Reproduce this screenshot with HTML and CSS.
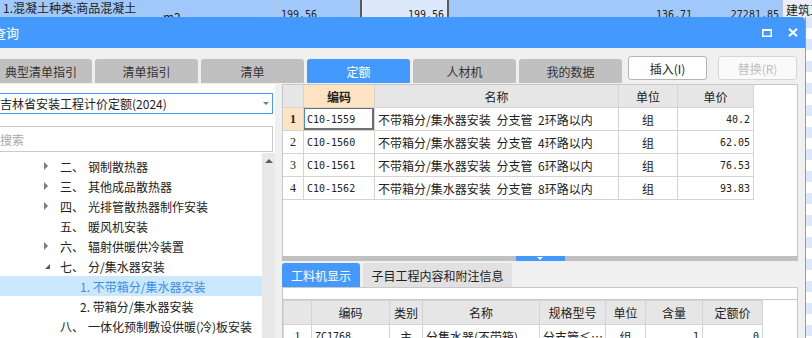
FILE: index.html
```html
<!DOCTYPE html>
<html>
<head>
<meta charset="utf-8">
<title>查询</title>
<link rel="stylesheet" href="styles.css">
</head>
<body>
<div class="sheet">
  <div class="sc sc-desc">1.混凝土种类:商品混凝土<br>2.混凝土强度等级:C30</div>
  <div class="sc sc-unit">m2</div>
  <div class="sc sc-a"></div>
  <div class="sc sc-qty mono">199.56</div>
  <div class="sc sc-cur mono">199.56</div>
  <div class="sc sc-b"></div>
  <div class="sc sc-c"></div>
  <div class="sc sc-price mono">136.71</div>
  <div class="sc sc-sum mono">27281.85</div>
  <div class="sc sc-last">建筑工程</div>
</div>

<div class="desk">
  <div class="dialog">
    <div class="titlebar">
      <span class="title">查询</span>
      <svg class="tb-max" width="10" height="8" viewBox="0 0 10 8"><rect x="0.75" y="1" width="8.5" height="6.25" fill="none" stroke="#fff" stroke-width="1.5"/><rect x="0" y="0" width="10" height="2" fill="#fff"/></svg>
      <svg class="tb-close" width="10" height="9" viewBox="0 0 10 9"><path d="M1 0.8 L9 8.2 M9 0.8 L1 8.2" stroke="#fff" stroke-width="2" fill="none"/></svg>
    </div>
    <div class="dlg-body">
      <div class="toolbar">
        <div class="tabs">
          <div class="tab">典型清单指引</div>
          <div class="tab">清单指引</div>
          <div class="tab">清单</div>
          <div class="tab on">定额</div>
          <div class="tab">人材机</div>
          <div class="tab">我的数据</div>
        </div>
        <button class="btn">插入(I)</button>
        <button class="btn btn-off">替换(R)</button>
      </div>

      <div class="main">
        <div class="left">
          <div class="combo"><span>吉林省安装工程计价定额(2024)</span><i class="caret"></i></div>
          <div class="search">搜索</div>
          <div class="tree">
            <ul class="nodes">
              <li class="node"><i class="tw closed"></i><span class="num">二、</span>钢制散热器</li>
              <li class="node"><i class="tw closed"></i><span class="num">三、</span>其他成品散热器</li>
              <li class="node"><i class="tw closed"></i><span class="num">四、</span>光排管散热器制作安装</li>
              <li class="node"><i class="tw"></i><span class="num">五、</span>暖风机安装</li>
              <li class="node"><i class="tw closed"></i><span class="num">六、</span>辐射供暖供冷装置</li>
              <li class="node"><i class="tw open"></i><span class="num">七、</span>分/集水器安装</li>
              <li class="node child sel">1. 不带箱分/集水器安装</li>
              <li class="node child">2. 带箱分/集水器安装</li>
              <li class="node"><i class="tw"></i><span class="num">八、</span>一体化预制敷设供暖(冷)板安装</li>
            </ul>
            <div class="vscroll"><i class="up"></i></div>
          </div>
        </div>

        <div class="right">
          <div class="upper">
            <table class="grid quota">
              <colgroup><col class="w21"><col class="w71"><col class="w244"><col class="w59"><col class="w76"></colgroup>
              <tr>
                <th></th><th class="sort">编码</th><th>名称</th><th>单位</th><th>单价</th>
              </tr>
              <tr>
                <td class="rn cur">1</td><td class="mono sel">C10-1559</td><td class="name">不带箱分/集水器安装 分支管 2环路以内</td><td class="c">组</td><td class="r mono">40.2</td>
              </tr>
              <tr>
                <td class="rn">2</td><td class="mono">C10-1560</td><td class="name">不带箱分/集水器安装 分支管 4环路以内</td><td class="c">组</td><td class="r mono">62.05</td>
              </tr>
              <tr>
                <td class="rn">3</td><td class="mono">C10-1561</td><td class="name">不带箱分/集水器安装 分支管 6环路以内</td><td class="c">组</td><td class="r mono">76.53</td>
              </tr>
              <tr>
                <td class="rn">4</td><td class="mono">C10-1562</td><td class="name">不带箱分/集水器安装 分支管 8环路以内</td><td class="c">组</td><td class="r mono">93.83</td>
              </tr>
            </table>
          </div>
          <div class="splitter"><span class="grip"></span></div>
          <div class="subtabs">
            <div class="stab on">工料机显示</div>
            <div class="stab">子目工程内容和附注信息</div>
          </div>
          <div class="lower">
            <div class="inner">
              <table class="grid res">
                <colgroup><col class="w28"><col class="w78"><col class="w33"><col class="w117"><col class="w66"><col class="w40"><col class="w57"><col class="w60"></colgroup>
                <tr class="hd">
                  <th></th><th>编码</th><th>类别</th><th>名称</th><th>规格型号</th><th>单位</th><th>含量</th><th>定额价</th>
                </tr>
                <tr>
                  <td class="rn">1</td><td class="mono">ZC1768</td><td class="c">主</td><td>分集水器(不带箱)</td><td>分支管≤…</td><td class="c">组</td><td class="r mono">1</td><td class="r mono">0</td>
                </tr>
              </table>
            </div>
          </div>
        </div>
      </div>
    </div>
  </div>
  <div class="desk-edge"></div>
</div>
</body>
</html>
```

FILE: styles.css
```css
body {
  margin: 0;
  width: 812px;
  height: 338px;
  overflow: hidden;
  background: #fff;
  color: #222;
  font-family: "Noto Sans CJK SC", "Noto Sans", sans-serif;
  font-size: 12px;
}

.mono {
  font-family: "DejaVu Sans Mono", "Liberation Mono", monospace;
  font-size: 10px;
}

/* spreadsheet row behind the dialog */
.sheet {
  display: flex;
  height: 17px;
  overflow: hidden;
  background: #a0c8fa;
}
.sc {
  flex: none;
  box-sizing: border-box;
  height: 17px;
  border-right: 1px solid #b8c4d4;
  white-space: nowrap;
  overflow: hidden;
}
.sc-desc {
  width: 160px;
  padding-left: 3px;
  line-height: 15px;
}
.sc-unit {
  width: 46px;
  padding: 8px 0 0 3px;
}
.sc-a { width: 71px; }
.sc-qty {
  width: 85px;
  padding: 9px 0 0 4px;
  border-right: 2px solid #5a5a5a;
}
.sc-cur {
  width: 87px;
  padding: 9px 3px 0 0;
  text-align: right;
  background: #dde9fb;
  border-right: 2px solid #5a5a5a;
}
.sc-b { width: 81px; }
.sc-c { width: 82px; }
.sc-price {
  width: 86px;
  padding: 9px 5px 0 0;
  text-align: right;
}
.sc-sum {
  width: 85px;
  padding: 9px 3px 0 0;
  text-align: right;
}
.sc-last {
  flex: 1;
  padding: 1px 0 0 3px;
  background: #e9eef8;
  border-right: none;
}

/* dialog */
.desk {
  display: flex;
  height: 321px;
}
.dialog {
  flex: none;
  width: 815px;
  margin-left: -10px;
  display: flex;
  flex-direction: column;
  background: #f0f0f0;
}
.desk-edge {
  flex: 1;
  border-left: 1px solid #9a9a9a;
  background: repeating-linear-gradient(to bottom, #dce8fb 0 11px, #fff 11px 22px);
}

.titlebar {
  height: 31px;
  flex: none;
  display: flex;
  align-items: center;
  padding: 0 7px 0 3px;
  background: #4499ff;
  color: #fff;
  font-size: 13px;
  border-radius: 0 4px 0 0;
}
.title {
  flex: 1;
}
.tb-close {
  margin-left: 16px;
}

.dlg-body {
  flex: 1;
  display: flex;
  flex-direction: column;
  min-height: 0;
}

.toolbar {
  height: 36px;
  flex: none;
  display: flex;
  align-items: flex-start;
}
.tabs {
  display: flex;
  gap: 3px;
  margin-top: 11px;
}
.tab {
  width: 103px;
  height: 24px;
  display: flex;
  align-items: center;
  justify-content: center;
  background: #c0c0c0;
  color: #333;
  border-radius: 3px 3px 0 0;
}
.tab:first-child {
  width: 102px;
}
.tab.on {
  background: #4499ff;
  color: #fff;
}
.btn {
  margin: 8px 0 0 6px;
  width: 79px;
  height: 24px;
  padding: 0;
  background: #fff;
  border: 1px solid #b4b4b4;
  border-radius: 3px;
  color: #222;
  font: inherit;
}
.btn + .btn {
  margin-left: 11px;
}
.btn-off {
  color: #bdbdbd;
  border-color: #d6d6d6;
  background: #fafafa;
}

.main {
  flex: 1;
  display: flex;
  gap: 7px;
  min-height: 0;
}

/* left: quota library tree */
.left {
  width: 285px;
  flex: none;
  display: flex;
  flex-direction: column;
  background: #fff;
}
.combo {
  box-sizing: border-box;
  margin: 9px 0 0 6px;
  width: 277px;
  height: 21px;
  flex: none;
  display: flex;
  align-items: center;
  padding-left: 3px;
  border: 1px solid #4499ff;
}
.caret {
  margin: 0 3px 0 auto;
  border-top: 3px solid #7a7a7a;
  border-left: 3px solid transparent;
  border-right: 3px solid transparent;
}
.search {
  box-sizing: border-box;
  margin: 12px 0 0 6px;
  width: 277px;
  height: 26px;
  flex: none;
  display: flex;
  align-items: center;
  padding-left: 3px;
  border: 1px solid #c9c9c9;
  color: #a8a8a8;
}
.tree {
  flex: 1;
  display: flex;
  min-height: 0;
  overflow: hidden;
}
.nodes {
  flex: 1;
  list-style: none;
  margin: 0;
  padding: 4px 0 0;
}
.node {
  height: 20px;
  display: flex;
  align-items: center;
  padding-left: 54px;
  white-space: nowrap;
}
.node.child {
  padding-left: 90px;
}
.node.sel {
  background: #cce8ff;
  color: #3d8fe6;
}
.tw {
  width: 16px;
  height: 20px;
  flex: none;
  display: flex;
  align-items: center;
}
.tw.closed::before {
  content: "";
  border-left: 4px solid #7c7c7c;
  border-top: 4px solid transparent;
  border-bottom: 4px solid transparent;
}
.tw.open::before {
  content: "";
  margin-left: 1px;
  border-right: 5px solid #5c5c5c;
  border-top: 5px solid transparent;
}
.num {
  width: 28px;
  flex: none;
}
.vscroll {
  width: 13px;
  flex: none;
  margin-top: 1px;
  display: flex;
  justify-content: center;
  background: #e8e8e8;
}
.vscroll .up {
  margin-top: 6px;
  height: 0;
  border-bottom: 4px solid #606060;
  border-left: 4px solid transparent;
  border-right: 4px solid transparent;
}

/* right: quota list and resources */
.right {
  width: 516px;
  flex: none;
  display: flex;
  flex-direction: column;
}
.upper {
  height: 172px;
  flex: none;
  box-sizing: border-box;
  border: 1px solid #c8c8c8;
  border-bottom: none;
  background: #fff;
  overflow: hidden;
}
.splitter {
  height: 5px;
  flex: none;
  display: flex;
  justify-content: center;
  background: #c0c0c0;
}
.grip {
  width: 49px;
  display: flex;
  align-items: center;
  justify-content: center;
  background: #4499ff;
}
.grip::before {
  content: "";
  border-top: 3px solid #fff;
  border-left: 3px solid transparent;
  border-right: 3px solid transparent;
}
.subtabs {
  height: 24px;
  flex: none;
  margin-top: 2px;
  display: flex;
  gap: 3px;
}
.stab {
  display: flex;
  align-items: center;
  justify-content: center;
  width: 149px;
  background: #e1e1e1;
  color: #222;
  border-radius: 3px 3px 0 0;
}
.stab.on {
  width: 78px;
  background: #4499ff;
  color: #fff;
}
.lower {
  flex: 1;
  box-sizing: border-box;
  padding-top: 11px;
  background: #fff;
  border: 1px solid #c8c8c8;
  border-bottom: none;
  overflow: hidden;
}
.inner {
  border-top: 1px solid #c8c8c8;
}

.grid {
  border-collapse: collapse;
  table-layout: fixed;
}
.grid th,
.grid td {
  height: 22px;
  padding: 0 3px;
  border: 1px solid #d4d4d4;
  font-weight: normal;
  white-space: nowrap;
  overflow: hidden;
  text-align: left;
}
.grid th {
  background: #e6e6e6;
  text-align: center;
}
.grid th.sort {
  background: #ffe4c4;
  font-weight: bold;
}
.grid .c { text-align: center; }
.grid .r { text-align: right; }
.grid .rn {
  padding: 0;
  text-align: center;
  font-family: "Liberation Serif", serif;
  font-size: 12px;
}
.grid .rn.cur {
  background: #ffe4c4;
  font-weight: bold;
}
.grid .sel {
  box-shadow: inset -2px -2px 0 #6e6e6e, inset 0 1px 0 #6e6e6e, inset 1px 0 0 #3d8fe6;
}
.grid .name {
  word-spacing: 3px;
}
.quota {
  margin: -1px 0 0 -1px;
  width: 471px;
}
.res {
  width: 479px;
}
.res .hd th {
  height: 23px;
}

.w21 { width: 21px; }
.w71 { width: 71px; }
.w244 { width: 244px; }
.w59 { width: 59px; }
.w76 { width: 76px; }
.w28 { width: 28px; }
.w78 { width: 78px; }
.w33 { width: 33px; }
.w117 { width: 117px; }
.w66 { width: 66px; }
.w40 { width: 40px; }
.w57 { width: 57px; }
.w60 { width: 60px; }
```
